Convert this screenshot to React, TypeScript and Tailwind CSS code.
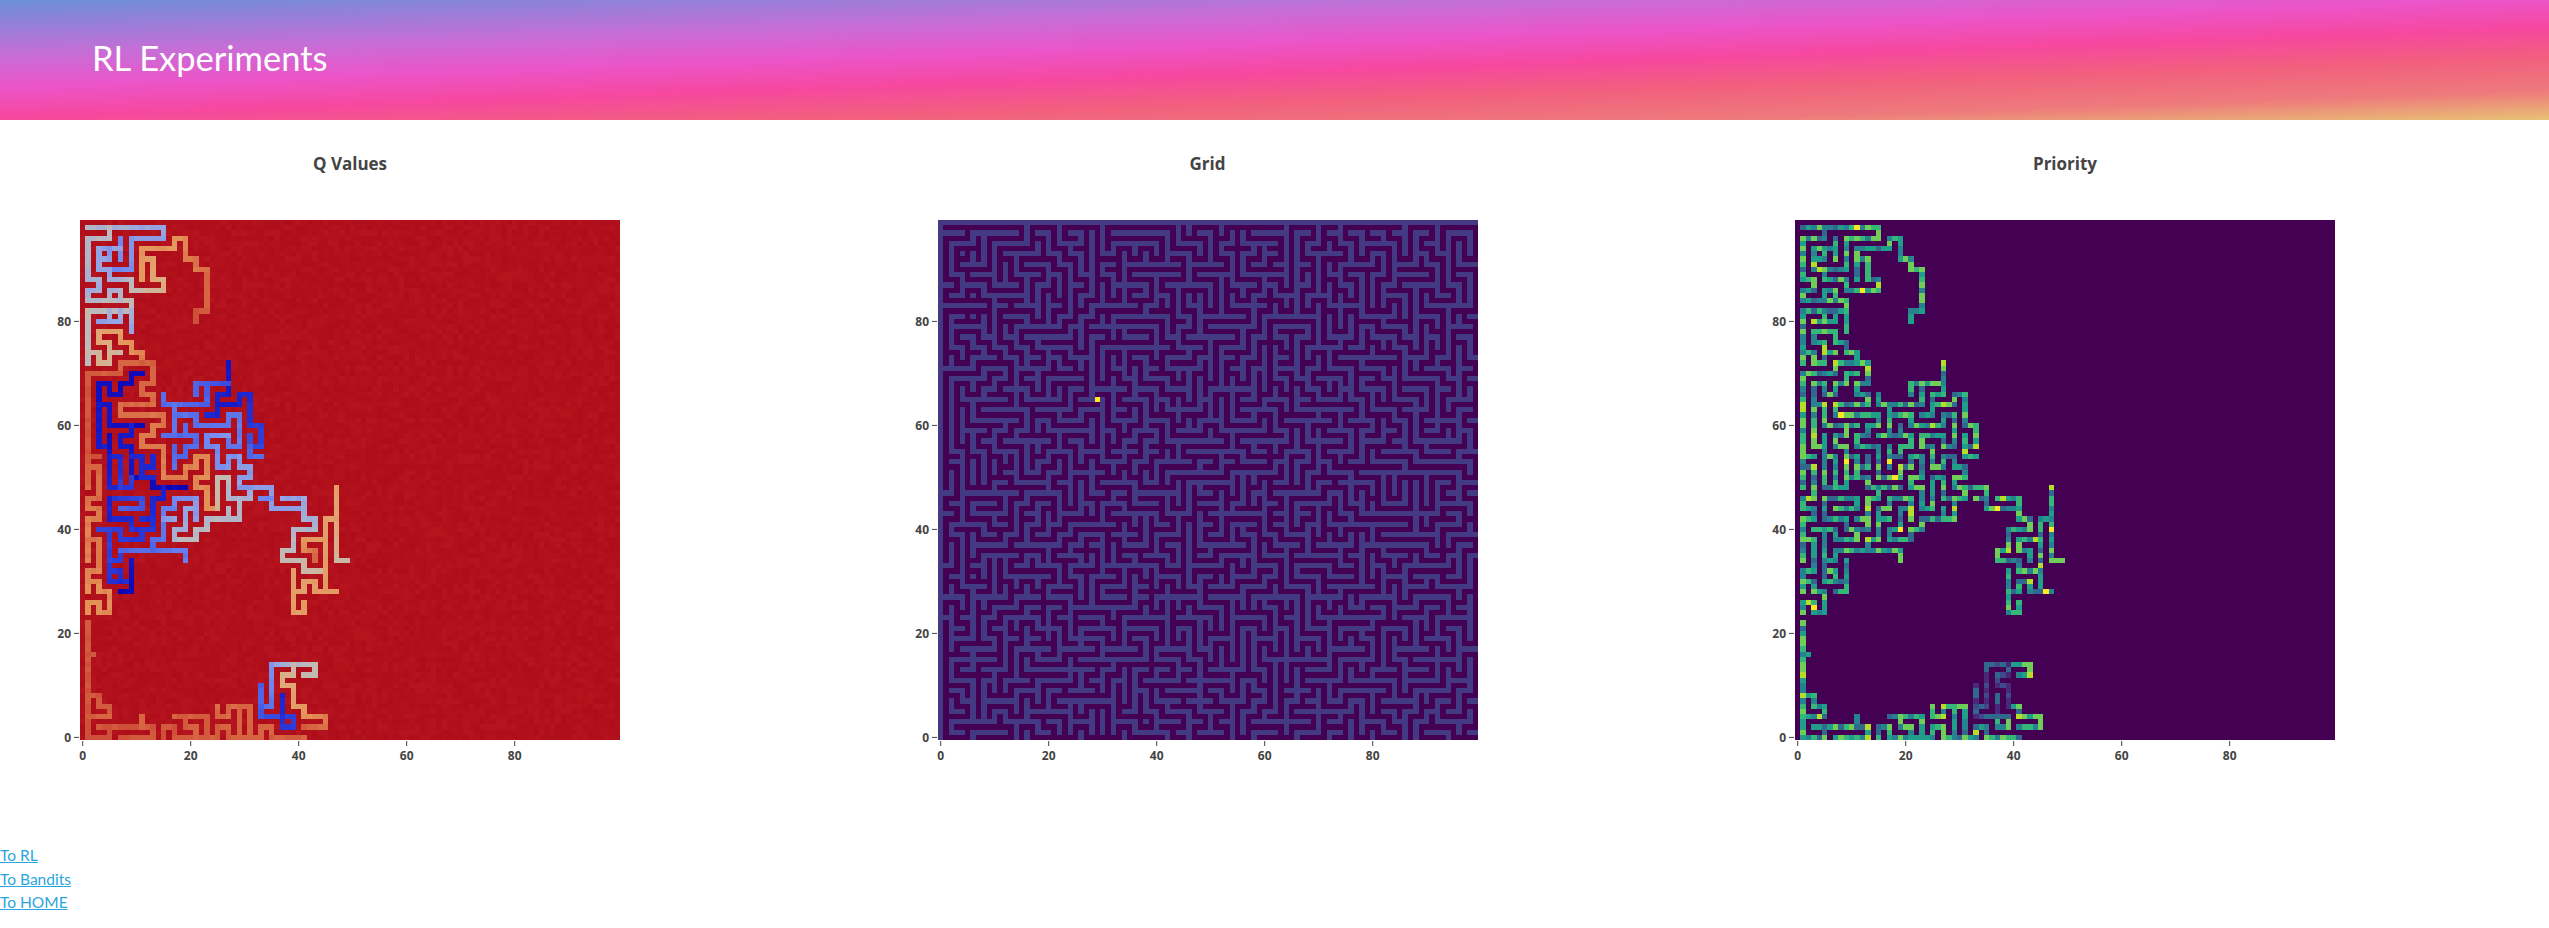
import React from 'react'

const CELL_W = 5.4
const CELL_H = 5.2
const SIZE = 100

// small seeded generator so the picture is the same on every load
function makeRandom(seed: number) {
  let a = seed
  return () => {
    a = (a + 0x6d2b79f5) | 0
    let t = Math.imul(a ^ (a >>> 15), 1 | a)
    t = (t + Math.imul(t ^ (t >>> 7), 61 | t)) ^ t
    return ((t ^ (t >>> 14)) >>> 0) / 4294967296
  }
}

// visited corridors as [value at start, value at end, "col row col row ..."], row 0 is the top of the plot
const TRAILS: [number, number, string][] = [
  [0.52, 0.38, '1 1 15 1 15 3 9 3 9 9 5 9'],
  [0.45, 0.55, '5 9 5 11 9 11 9 13'],
  [0.55, 0.72, '9 13 15 13 15 11 13 11 13 7 11 7'],
  [0.74, 0.76, '11 11 11 5 17 5 17 3 19 3'],
  [0.78, 0.88, '19 3 19 7 21 7 21 9 23 9 23 17 21 17 21 19'],
  [0.38, 0.4, '7 3 7 7'],
  [0.42, 0.46, '3 5 7 5'],
  [0.46, 0.46, '3 5 3 9 5 9'],
  [0.42, 0.44, '5 5 5 7'],
  [0.46, 0.44, '3 7 5 7'],
  [0.54, 0.48, '5 1 5 3 1 3 1 11 3 11 3 13 1 13 1 15'],
  [0.52, 0.55, '1 15 9 15'],
  [0.5, 0.54, '5 13 5 15'],
  [0.5, 0.52, '5 13 7 13 7 15'],
  [0.55, 0.54, '9 15 9 17 1 17 1 27'],
  [0.44, 0.48, '3 19 7 19 7 17'],
  [0.5, 0.46, '5 17 5 19'],
  [0.5, 0.46, '9 17 9 21'],
  [0.68, 0.8, '3 21 7 21 7 23 9 23 9 25 11 25 11 27'],
  [0.66, 0.58, '3 21 3 23 5 23 5 27 3 27 3 25 1 25'],
  [0.6, 0.58, '5 25 7 25'],
  [0.85, 0.76, '7 27 13 27 13 31 11 31 11 33 13 33 13 35 7 35 7 37 15 37 15 39 13 39 13 41 11 41 11 43 15 43 15 49 19 49 19 47 21 47 21 45 23 45 23 49 21 49 21 51 23 51 23 55 25 55'],
  [0.6, 0.42, '25 55 25 49 27 49 27 53 31 53 31 51 29 51 29 49 31 49 31 47'],
  [0.85, 0.88, '7 27 7 29 1 29 1 45 3 45'],
  [0.86, 0.82, '1 45 1 51'],
  [0.84, 0.78, '1 47 3 47 3 53 1 53 1 55 3 55 3 57 1 57 1 65'],
  [0.82, 0.76, '1 61 3 61 3 67 1 67 1 71'],
  [0.78, 0.76, '1 69 3 69 3 71 5 71 5 75 3 75 3 73 1 73 1 75'],
  [0.86, 0.88, '1 77 1 99'],
  [0.87, 0.87, '1 83 2 83'],
  [0.87, 0.85, '1 91 3 91 3 93 5 93 5 95 1 95'],
  [0.87, 0.87, '3 97 13 97 13 99'],
  [0.85, 0.85, '11 95 11 97'],
  [0.88, 0.88, '1 99 5 99 5 97'],
  [0.88, 0.86, '7 99 13 99'],
  [0.87, 0.85, '15 99 15 97 17 97 17 99 23 99 23 95 17 95'],
  [0.85, 0.84, '19 95 19 97 21 97 21 99'],
  [0.85, 0.84, '23 99 25 99 25 97 27 97 27 99 33 99'],
  [0.83, 0.85, '25 93 25 95 27 95 27 93 31 93 31 99 33 99 33 97 35 97 35 99 41 99'],
  [0.84, 0.84, '29 93 29 99'],
  [0.1, 0.03, '3 43 3 31 5 31 5 33 7 33 7 31 9 31 9 29 11 29'],
  [0.1, 0.04, '3 35 5 35 5 39 11 39'],
  [0.12, 0.02, '9 39 9 41 7 41 7 43 9 43 9 49 13 49 13 51 19 51'],
  [0.1, 0.2, '3 43 5 43 5 49'],
  [0.04, 0.2, '5 41 5 51 9 51 9 49'],
  [0.12, 0.2, '5 45 7 45 7 51'],
  [0.14, 0.14, '9 45 11 45 11 49 13 49'],
  [0.14, 0.14, '11 47 13 47 13 45'],
  [0.1, 0.18, '15 51 15 53 13 53 13 59 11 59'],
  [0.15, 0.15, '13 57 11 57'],
  [0.18, 0.3, '5 53 11 53 11 55 7 55'],
  [0.12, 0.22, '5 53 5 57 9 57 9 59 11 59 11 61 7 61 7 59 3 59'],
  [0.22, 0.14, '5 59 5 69 9 69 9 65'],
  [0.22, 0.2, '5 65 7 65 7 63'],
  [0.18, 0.14, '5 67 7 67 7 69'],
  [0.08, 0.02, '9 65 9 71 7 71'],
  [0.3, 0.36, '7 63 19 63 19 65'],
  [0.3, 0.44, '13 63 13 61 15 61 15 55 17 55 17 53 21 53 21 57'],
  [0.42, 0.46, '15 57 17 57'],
  [0.54, 0.52, '17 61 21 61 21 59 23 59 23 57 29 57 29 53'],
  [0.5, 0.44, '17 61 17 59 19 59 19 55 21 55'],
  [0.52, 0.52, '27 55 27 57'],
  [0.08, 0.14, '27 27 27 33 25 33 25 37 23 37'],
  [0.24, 0.3, '27 31 21 31 21 33'],
  [0.28, 0.32, '23 31 23 35 15 35 15 33'],
  [0.33, 0.36, '17 35 17 41'],
  [0.33, 0.35, '17 37 21 37 21 39 27 39 27 37 29 37 29 43 27 43 27 41'],
  [0.32, 0.3, '15 41 21 41 21 43 19 43 19 45 17 45'],
  [0.3, 0.33, '17 43 17 47'],
  [0.32, 0.32, '19 39 19 41'],
  [0.4, 0.42, '23 41 27 41'],
  [0.38, 0.44, '23 41 23 43 25 43 25 47 27 47 27 45 29 45 29 47 31 47 31 49'],
  [0.1, 0.24, '25 35 29 35 29 33 31 33 31 39 33 39 33 43 31 43 31 41'],
  [0.28, 0.32, '31 43 31 45 33 45'],
  [0.42, 0.46, '29 51 35 51 35 55 41 55 41 53 37 53'],
  [0.38, 0.38, '33 53 35 53'],
  [0.47, 0.6, '41 53 41 57 43 57 43 59 39 59 39 63 37 63 37 65 41 65 41 67 45 67'],
  [0.7, 0.58, '47 51 47 65 49 65'],
  [0.68, 0.7, '45 57 47 57'],
  [0.7, 0.72, '45 57 45 71'],
  [0.72, 0.72, '41 61 45 61'],
  [0.74, 0.85, '41 61 41 63 43 63 43 65'],
  [0.7, 0.72, '39 67 39 75 41 75 41 73'],
  [0.7, 0.72, '39 71 41 71 41 69 43 69 43 71 47 71'],
  [0.55, 0.46, '43 85 35 85'],
  [0.56, 0.56, '43 85 43 87 41 87'],
  [0.42, 0.28, '35 85 35 93 33 93 33 89'],
  [0.28, 0.12, '33 93 33 95 39 95 39 97 37 97 37 91'],
  [0.58, 0.86, '39 85 39 87 37 87 37 89 39 89 39 93 41 93 41 95 45 95 45 97 41 97'],
]

type Cells = Map<number, number>

const key = (col: number, row: number) => row * SIZE + col

function buildTrailCells() {
  const cells: Cells = new Map()
  for (const [from, to, line] of TRAILS) {
    const nums = line.split(' ').map(Number)
    const steps: [number, number][] = [[nums[0], nums[1]]]
    for (let i = 2; i < nums.length; i += 2) {
      let [c, r] = steps[steps.length - 1]
      while (c !== nums[i] || r !== nums[i + 1]) {
        c += Math.sign(nums[i] - c)
        r += Math.sign(nums[i + 1] - r)
        steps.push([c, r])
      }
    }
    steps.forEach(([c, r], i) => {
      cells.set(key(c, r), from + ((to - from) * i) / Math.max(steps.length - 1, 1))
    })
  }
  return cells
}

const trailCells = buildTrailCells()

// the rest of the maze grows out of the visited corridors
function buildMaze() {
  const random = makeRandom(11)
  const open = new Set<number>(trailCells.keys())
  const seen = new Set<number>()
  const active: [number, number][] = []
  for (let r = 1; r < SIZE; r += 2) {
    for (let c = 1; c < SIZE; c += 2) {
      if (open.has(key(c, r))) {
        seen.add(key(c, r))
        active.push([c, r])
      }
    }
  }
  for (let i = active.length - 1; i > 0; i--) {
    const j = Math.floor(random() * (i + 1))
    ;[active[i], active[j]] = [active[j], active[i]]
  }
  const dirs = [[2, 0], [-2, 0], [0, 2], [0, -2]]
  while (active.length) {
    const pick = random() < 0.8 ? active.length - 1 : Math.floor(random() * active.length)
    const [c, r] = active[pick]
    const next = dirs
      .map(([dc, dr]) => [c + dc, r + dr])
      .filter(([nc, nr]) => nc > 0 && nr > 0 && nc < SIZE && nr < SIZE && !seen.has(key(nc, nr)))
    if (!next.length) {
      active.splice(pick, 1)
      continue
    }
    const [nc, nr] = next[Math.floor(random() * next.length)]
    seen.add(key(nc, nr))
    open.add(key(nc, nr))
    open.add(key((c + nc) / 2, (r + nr) / 2))
    active.push([nc, nr])
  }
  return open
}

const Q_STOPS: [number, string][] = [
  [0, '#0a00b0'],
  [0.12, '#1a20cc'],
  [0.25, '#3c50e0'],
  [0.38, '#6f87f0'],
  [0.47, '#9aa8e0'],
  [0.55, '#c0bdb8'],
  [0.65, '#e2a878'],
  [0.75, '#e4965a'],
  [0.85, '#d5603f'],
  [1, '#b2111c'],
]

function mix(a: string, b: string, t: number) {
  const part = (s: string, i: number) => parseInt(s.slice(1 + i * 2, 3 + i * 2), 16)
  const out = [0, 1, 2].map((i) =>
    Math.round(part(a, i) + (part(b, i) - part(a, i)) * t).toString(16).padStart(2, '0')
  )
  return `#${out.join('')}`
}

function qColor(value: number) {
  const v = Math.max(0, Math.min(1, Math.round(value * 50) / 50))
  for (let i = 1; i < Q_STOPS.length; i++) {
    if (v <= Q_STOPS[i][0]) {
      const [p0, c0] = Q_STOPS[i - 1]
      const [p1, c1] = Q_STOPS[i]
      return mix(c0, c1, (v - p0) / (p1 - p0))
    }
  }
  return '#b2111c'
}

const VIRIDIS = ['#482878', '#3e4a89', '#31688e', '#26828e', '#1f9e89', '#35b779', '#6ece58', '#b5de2b', '#fde725']

function qValueCells() {
  const random = makeRandom(5)
  const reds = ['#b2111c', '#ae0f1b', '#b5141f', '#b00d1a', '#b3101d']
  const out = new Map<number, string>()
  for (let i = 0; i < SIZE * SIZE; i++) {
    const value = trailCells.get(i)
    out.set(i, value === undefined ? reds[Math.floor(random() * reds.length)] : qColor(value + (random() - 0.5) * 0.02))
  }
  return out
}

function gridCells() {
  const maze = buildMaze()
  const out = new Map<number, string>()
  for (let i = 0; i < SIZE * SIZE; i++) {
    out.set(i, maze.has(i) ? '#440154' : '#443a83')
  }
  out.set(key(29, 34), '#fde725')
  return out
}

function priorityCells() {
  const random = makeRandom(23)
  const out = new Map<number, string>()
  for (let i = 0; i < SIZE * SIZE; i++) {
    out.set(i, '#440154')
  }
  for (const i of trailCells.keys()) {
    const col = i % SIZE
    const row = Math.floor(i / SIZE)
    const roll = random()
    let step = 3 + Math.floor(random() * 4)
    if (roll > 0.95) step = 7
    if (roll > 0.985) step = 8
    if (roll < 0.1) step = 2
    // this stretch was seen rarely and stays darker
    if (row >= 85 && row <= 95 && col >= 33 && col <= 39) step = Math.floor(random() * 3)
    out.set(i, VIRIDIS[step])
  }
  return out
}

function cellPaths(cells: Map<number, string>) {
  const byColor = new Map<string, string[]>()
  cells.forEach((color, i) => {
    const col = i % SIZE
    const row = Math.floor(i / SIZE)
    const d = `M${(80 + col * CELL_W).toFixed(1)} ${(row * CELL_H).toFixed(1)}h${CELL_W}v${CELL_H}h-${CELL_W}z`
    if (!byColor.has(color)) byColor.set(color, [])
    byColor.get(color)!.push(d)
  })
  return [...byColor.entries()]
}

const TICKS = [0, 20, 40, 60, 80]

type PanelProps = {
  title: string
  cells: Map<number, string>
}

function HeatmapPanel(props: PanelProps) {
  const paths = cellPaths(props.cells)
  return (
    <div className="w-[700px] h-[700px] shrink-0">
      <div className="h-[100px] pt-[33px] text-center text-[17px] leading-[22px] font-bold text-[#444] font-['Open_Sans',sans-serif]">
        {props.title}
      </div>
      <svg width={700} height={600} className="block">
        <g shapeRendering="crispEdges">
          {paths.map(([color, parts]) => (
            <path key={color} d={parts.join('')} fill={color} />
          ))}
        </g>
        <g fill="#444" fontSize={12} fontWeight={700} fontFamily="'Open Sans', sans-serif">
          {TICKS.map((tick) => {
            const x = 80 + (tick + 0.5) * CELL_W
            const y = (99 - tick + 0.5) * CELL_H
            return (
              <React.Fragment key={tick}>
                <path d={`M${x} 521v5`} stroke="#444" fill="none" />
                <text x={x} y={540} textAnchor="middle">{tick}</text>
                <path d={`M74 ${y}h5`} stroke="#444" fill="none" />
                <text x={71} y={y + 5} textAnchor="end">{tick}</text>
              </React.Fragment>
            )
          })}
        </g>
      </svg>
    </div>
  )
}

const LINKS = ['To RL', 'To Bandits', 'To HOME']

export default function App() {
  const qValues = React.useMemo(qValueCells, [])
  const grid = React.useMemo(gridCells, [])
  const priority = React.useMemo(priorityCells, [])

  return (
    <div className="min-h-[928px] bg-white overflow-hidden">
      <header className="h-[120px] flex items-center pl-[92px] pb-[4px] bg-[linear-gradient(178deg,#6a8fd8_0%,#c86dd7_27%,#ec54c8_42%,#f6489f_56%,#f25f7e_70%,#ee7a7c_86%,#e8c274_100%)]">
        <h1 className="text-[34.5px] leading-none font-normal text-white font-['Lato',sans-serif]">RL Experiments</h1>
      </header>

      <div className="flex gap-[157.5px]">
        <HeatmapPanel title="Q Values" cells={qValues} />
        <HeatmapPanel title="Grid" cells={grid} />
        <HeatmapPanel title="Priority" cells={priority} />
      </div>

      <nav className="flex flex-col items-start pt-[24px] text-[15.5px] leading-[23.5px] font-['Lato',sans-serif]">
        {LINKS.map((link) => (
          <a key={link} href="#" className="text-[#29a6de] underline">
            {link}
          </a>
        ))}
      </nav>
    </div>
  )
}
